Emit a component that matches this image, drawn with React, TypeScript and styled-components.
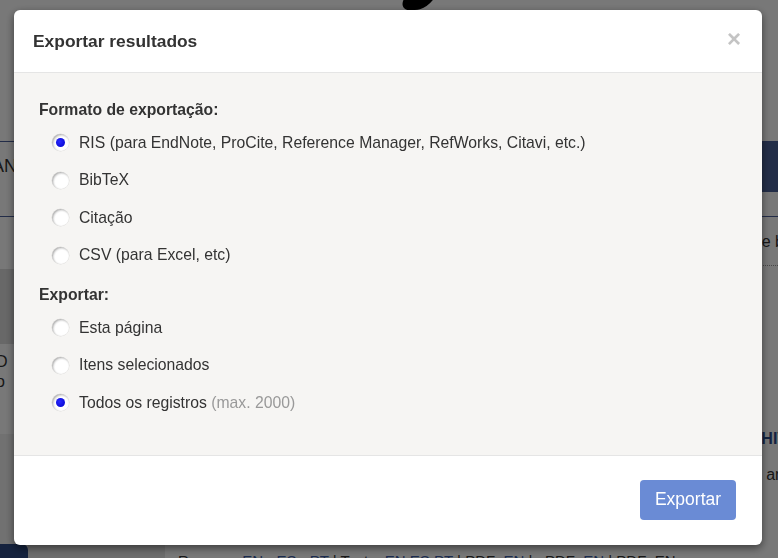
import React, { useState } from 'react'
import styled, { createGlobalStyle } from 'styled-components'

const GlobalStyle = createGlobalStyle`
  html, body {
    margin: 0;
    padding: 0;
    background: #fff;
    font-family: "Liberation Sans", Arial, sans-serif;
    overflow: hidden;
  }
`

// ---- page underneath the modal ----
const Page = styled.div`
  width: 778px;
  height: 558px;
  overflow: hidden;
  display: flex;
  flex-direction: column;
  color: #333;
`
const Masthead = styled.div`
  height: 142px;
  display: flex;
  justify-content: center;
`
const Logo = styled.div`
  width: 30px;
  height: 14px;
  margin-left: 56px;
  margin-top: -4px;
  background: #000;
  border-radius: 0 0 24px 18px;
  transform: skewX(-25deg);
`
const NavBar = styled.div`
  height: 75px;
  border-top: 1px solid #4a5f9a;
  border-bottom: 1px solid #4a5f9a;
  display: flex;
  justify-content: space-between;
  align-items: flex-start;
`
const NavText = styled.div`
  font-size: 18px;
  margin: 14px 0 0 -8px;
  color: #333;
`
const NavButton = styled.div`
  width: 40px;
  height: 50px;
  background: #4a6198;
`
const Columns = styled.div`
  flex: 1;
  display: grid;
  grid-template-columns: 165px 1fr;
`
const Sidebar = styled.div`
  display: flex;
  flex-direction: column;
`
const SideBlock = styled.div<{ $bg: string; $h: number }>`
  height: ${p => p.$h}px;
  background: ${p => p.$bg};
  font-size: 16px;
`
const SideText = styled.div`
  margin-left: -4px;
  padding-top: 8px;
  line-height: 20px;
`
const Content = styled.div`
  display: flex;
  flex-direction: column;
  align-items: flex-end;
`
const ContentText = styled.div<{ $top: number }>`
  margin-top: ${p => p.$top}px;
  font-size: 16px;
  margin-right: -6px;
`
const Dotted = styled.div`
  width: 100%;
  border-bottom: 1px dotted #999;
  margin-top: 14px;
`
const Heading = styled.div`
  margin-top: 164px;
  margin-right: -10px;
  font-size: 16px;
  font-weight: bold;
  color: #2a4a8a;
`
const BottomRow = styled.div`
  display: flex;
  height: 14px;
`
const BlueTab = styled.div`
  width: 28px;
  background: #2d4a85;
  border-radius: 0 6px 0 0;
`
const GrayTab = styled.div`
  width: 137px;
  background: #e8e8e8;
`
const Links = styled.div`
  padding: 3px 0 0 13px;
  font-size: 15px;
  white-space: nowrap;
  line-height: 28px;
  color: #333;
  span { color: #3a5ca8; }
`

const Backdrop = styled.div`
  position: fixed;
  inset: 0;
  background: rgba(0, 0, 0, 0.53);
`

// ---- modal ----
const Modal = styled.div`
  position: fixed;
  left: 14px;
  top: 10px;
  width: 748px;
  background: #fff;
  border-radius: 6px;
  box-shadow: 0 3px 9px rgba(0, 0, 0, 0.5);
  overflow: hidden;
  color: #333;
`
const Header = styled.div`
  height: 62px;
  padding: 0 21px 0 19px;
  display: flex;
  align-items: center;
  justify-content: space-between;
  border-bottom: 1px solid #e5e5e5;
`
const Title = styled.h4`
  margin: 0;
  font-size: 17.4px;
  font-weight: bold;
  color: #333;
`
const Close = styled.button`
  border: 0;
  background: none;
  padding: 0;
  font-family: "Liberation Sans", Arial, sans-serif;
  font-size: 24px;
  font-weight: bold;
  line-height: 1;
  color: #c4c4c4;
  cursor: pointer;
  margin-top: -4px;
`
const Body = styled.div`
  background: #f6f5f3;
  padding: 27px 25px 33px;
  border-bottom: 1px solid #e5e5e5;
`
const GroupLabel = styled.div<{ $first?: boolean }>`
  font-size: 15.75px;
  font-weight: bold;
  line-height: 20px;
  margin: ${p => (p.$first ? 0 : 11)}px 0 4px;
`
const Option = styled.label`
  height: 37.5px;
  display: flex;
  align-items: center;
  gap: 10px;
  padding-left: 13px;
  font-size: 15.75px;
  cursor: pointer;
`
const Radio = styled.span<{ $checked: boolean }>`
  width: 17px;
  height: 17px;
  border-radius: 50%;
  box-sizing: border-box;
  background: radial-gradient(circle at 62% 62%, #ffffff 48%, #e2e2e2 100%);
  box-shadow: inset 1px 1px 2px rgba(0, 0, 0, 0.28), 0 0 0 0.5px rgba(0, 0, 0, 0.1);
  display: flex;
  align-items: center;
  justify-content: center;
  &::after {
    content: '';
    width: 9px;
    height: 9px;
    border-radius: 50%;
    background: radial-gradient(circle at 40% 40%, #2a2aff, #0000c8);
    display: ${p => (p.$checked ? 'block' : 'none')};
  }
`
const Muted = styled.span`
  color: #999;
`
const Footer = styled.div`
  height: 89px;
  box-sizing: border-box;
  padding: 24px 26px 0;
  display: flex;
  justify-content: flex-end;
  align-items: flex-start;
`
const PrimaryButton = styled.button`
  width: 96px;
  height: 40px;
  border: 0;
  border-radius: 4px;
  background: #6a8bd5;
  color: #fff;
  font-family: "Liberation Sans", Arial, sans-serif;
  font-size: 17.5px;
  cursor: pointer;
`

const formats = [
  'RIS (para EndNote, ProCite, Reference Manager, RefWorks, Citavi, etc.)',
  'BibTeX',
  'Citação',
  'CSV (para Excel, etc)',
]

export default function App() {
  const [format, setFormat] = useState(0)
  const [scope, setScope] = useState(2)

  return (
    <>
      <GlobalStyle />
      <Page>
        <Masthead>
          <Logo />
        </Masthead>
        <NavBar>
          <NavText>AN</NavText>
          <NavButton />
        </NavBar>
        <Columns>
          <Sidebar>
            <SideBlock $bg="#fff" $h={52} />
            <SideBlock $bg="#ddd" $h={75} />
            <SideBlock $bg="#fff" $h={90}>
              <SideText>D<br />o</SideText>
            </SideBlock>
            <SideBlock $bg="#f0f0f0" $h={110} />
          </Sidebar>
          <Content>
            <ContentText $top={16}>e b</ContentText>
            <Dotted />
            <Heading>HIV</Heading>
            <ContentText $top={18}>an</ContentText>
          </Content>
        </Columns>
        <BottomRow>
          <BlueTab />
          <GrayTab />
          <Links>
            Resumo: <span>EN</span> · <span>ES</span> · <span>PT</span> | Texto: <span>EN</span>{' '}
            <span>ES</span> <span>PT</span> | PDF: <span>EN</span> | ePDF: <span>EN</span> | PDF: EN
          </Links>
        </BottomRow>
      </Page>
      <Backdrop />
      <Modal>
        <Header>
          <Title>Exportar resultados</Title>
          <Close aria-label="Fechar">×</Close>
        </Header>
        <Body>
          <GroupLabel $first>Formato de exportação:</GroupLabel>
          {formats.map((f, i) => (
            <Option key={f} onClick={() => setFormat(i)}>
              <Radio $checked={format === i} />
              {f}
            </Option>
          ))}
          <GroupLabel>Exportar:</GroupLabel>
          <Option onClick={() => setScope(0)}>
            <Radio $checked={scope === 0} />
            Esta página
          </Option>
          <Option onClick={() => setScope(1)}>
            <Radio $checked={scope === 1} />
            Itens selecionados
          </Option>
          <Option onClick={() => setScope(2)}>
            <Radio $checked={scope === 2} />
            <span>
              Todos os registros <Muted>(max. 2000)</Muted>
            </span>
          </Option>
        </Body>
        <Footer>
          <PrimaryButton>Exportar</PrimaryButton>
        </Footer>
      </Modal>
    </>
  )
}
